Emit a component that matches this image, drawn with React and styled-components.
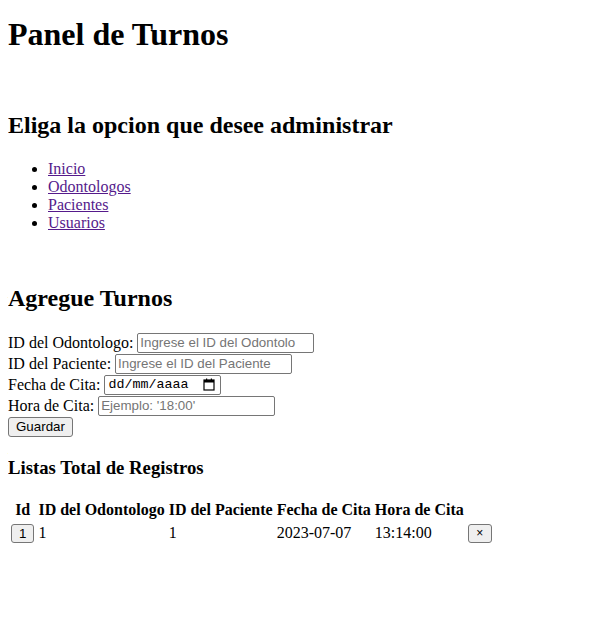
import React, { useState } from 'react';
import styled, { createGlobalStyle } from 'styled-components';

const GlobalStyle = createGlobalStyle`
    body {
        margin: 8px;
        font-family: "Liberation Serif", "Times New Roman", serif;
        font-size: 16px;
        color: #000;
        background: #fff;
    }
`;

const Title = styled.h1`
    font-size: 32px;
    font-weight: bold;
    margin: 8px 0 59px;
`;

const SectionTitle = styled.h2`
    font-size: 24px;
    font-weight: bold;
    margin: ${(p) => p.$top || '0'} 0 ${(p) => p.$bottom || '21px'};
`;

const SubTitle = styled.h3`
    font-size: 18.72px;
    font-weight: bold;
    margin: 20px 0 19px;
`;

const Menu = styled.ul`
    margin: 0;
    padding-left: 40px;
    list-style: disc;
`;

const MenuLink = styled.a`
    color: #551a8b;
    text-decoration: underline;
`;

const Form = styled.form`
    margin: 0;
`;

const Field = styled.div`
    height: 21px;
    display: flex;
    align-items: center;
    gap: 4px;
`;

const TextInput = styled.input`
    box-sizing: border-box;
    width: 177px;
    height: 20px;
    padding: 1px 2px;
    border: 1px solid #767676;
    border-radius: 2px;
    font-family: "Liberation Sans", Arial, sans-serif;
    font-size: 13.333px;
    color: #000;

    &::placeholder {
        color: #757575;
    }
`;

const DateBox = styled.label`
    box-sizing: border-box;
    width: 117px;
    height: 20px;
    display: inline-flex;
    align-items: center;
    padding: 0 5px 0 3px;
    border: 1px solid #767676;
    border-radius: 2px;
    background: #fff;
`;

const DateText = styled.input`
    flex: 1;
    width: 0;
    border: none;
    outline: none;
    padding: 0;
    font-family: "Liberation Mono", "Courier New", monospace;
    font-size: 13.333px;
    color: #000;

    &::placeholder {
        color: #000;
    }
`;

const Button = styled.button`
    box-sizing: border-box;
    font-family: "Liberation Sans", Arial, sans-serif;
    font-size: ${(p) => p.$small ? '12px' : '13.333px'};
    line-height: 15px;
    color: #000;
    background: #efefef;
    border: 1px solid #767676;
    border-radius: 3px;
    padding: 1px 7px;
    height: ${(p) => p.$row ? '19px' : '20px'};
    min-width: ${(p) => p.$small ? '24px' : 'auto'};
    cursor: pointer;
`;

const Table = styled.table`
    border-spacing: 2px;
`;

const Th = styled.th`
    padding: 1px;
    font-weight: bold;
    text-align: center;
`;

const Td = styled.td`
    padding: 1px;
    text-align: left;
`;

function CalendarIcon() {
    return (
        <svg width="12" height="13" viewBox="0 0 12 13">
            <rect x="1" y="2" width="10" height="10" fill="none" stroke="#000" strokeWidth="1.2" />
            <rect x="1" y="2" width="10" height="2.5" fill="#000" />
            <rect x="3" y="0.5" width="1.2" height="2" fill="#000" />
            <rect x="7.8" y="0.5" width="1.2" height="2" fill="#000" />
        </svg>
    );
}

function App() {
    const [turnos, setTurnos] = useState([
        { id: 1, odontologo: 1, paciente: 1, fecha: '2023-07-07', hora: '13:14:00' },
    ]);

    const borrar = (id) => setTurnos(turnos.filter((t) => t.id !== id));

    return (
        <>
            <GlobalStyle />
            <Title>Panel de Turnos</Title>
            <SectionTitle>Eliga la opcion que desee administrar</SectionTitle>
            <Menu>
                <li><MenuLink href="#">Inicio</MenuLink></li>
                <li><MenuLink href="#">Odontologos</MenuLink></li>
                <li><MenuLink href="#">Pacientes</MenuLink></li>
                <li><MenuLink href="#">Usuarios</MenuLink></li>
            </Menu>

            <SectionTitle $top="53px" $bottom="20px">Agregue Turnos</SectionTitle>
            <Form onSubmit={(e) => e.preventDefault()}>
                <Field>
                    ID del Odontologo:
                    <TextInput placeholder="Ingrese el ID del Odontolo" />
                </Field>
                <Field>
                    ID del Paciente:
                    <TextInput placeholder="Ingrese el ID del Paciente" />
                </Field>
                <Field>
                    Fecha de Cita:
                    <DateBox>
                        <DateText placeholder="dd/mm/aaaa" />
                        <CalendarIcon />
                    </DateBox>
                </Field>
                <Field>
                    Hora de Cita:
                    <TextInput placeholder="Ejemplo: '18:00'" />
                </Field>
                <Field>
                    <Button type="submit">Guardar</Button>
                </Field>
            </Form>

            <SubTitle>Listas Total de Registros</SubTitle>
            <Table>
                <thead>
                    <tr>
                        <Th>Id</Th>
                        <Th>ID del Odontologo</Th>
                        <Th>ID del Paciente</Th>
                        <Th>Fecha de Cita</Th>
                        <Th>Hora de Cita</Th>
                        <Th></Th>
                    </tr>
                </thead>
                <tbody>
                    {turnos.map((t) => (
                        <tr key={t.id}>
                            <Td><Button $row>{t.id}</Button></Td>
                            <Td>{t.odontologo}</Td>
                            <Td>{t.paciente}</Td>
                            <Td>{t.fecha}</Td>
                            <Td>{t.hora}</Td>
                            <Td><Button $row $small onClick={() => borrar(t.id)}>×</Button></Td>
                        </tr>
                    ))}
                </tbody>
            </Table>
        </>
    );
}

export default App;
